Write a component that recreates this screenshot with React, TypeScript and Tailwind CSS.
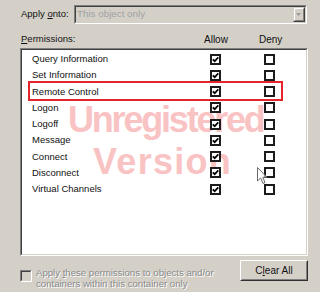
import React from "react";

const items = [
  "Query Information",
  "Set Information",
  "Remote Control",
  "Logon",
  "Logoff",
  "Message",
  "Connect",
  "Disconnect",
  "Virtual Channels",
];

function Check({ checked }: { checked: boolean }) {
  return (
    <div className="w-[11px] h-[11px] border-2 border-[#1c1c1c] bg-white flex items-center justify-center shrink-0">
      {checked && (
        <svg width="7" height="7" viewBox="0 0 7 7">
          <path d="M0.8 3.3 L2.7 5.2 L6.3 1.3" fill="none" stroke="#000" strokeWidth="1.7" />
        </svg>
      )}
    </div>
  );
}

export default function App() {
  return (
    <div className="relative w-[320px] h-[292px] overflow-hidden bg-[#d4d0c8] font-['Liberation_Sans',Arial,sans-serif] text-[9.5px] text-[#111] pt-[5px]">
      {/* Apply onto row */}
      <div className="flex items-center h-[19px] pl-[21px]">
        <div className="w-[53px]">
          Apply <span className="underline">o</span>nto:
        </div>
        <div className="w-[233px] h-[19px] border border-t-[#808080] border-l-[#808080] border-b-white border-r-white">
          <div className="w-full h-full border border-t-[#404040] border-l-[#404040] border-b-[#d4d0c8] border-r-[#d4d0c8] flex items-center">
            <div className="flex-1 pl-[1px] text-[9.8px] text-[#a0a0a0]">This object only</div>
            <div className="w-[12px] h-[15px] border border-t-[#d4d0c8] border-l-[#d4d0c8] border-b-[#404040] border-r-[#404040]">
              <div className="w-full h-full border border-t-white border-l-white border-b-[#808080] border-r-[#808080] flex items-center justify-center">
                <svg width="6" height="4" viewBox="0 0 6 4">
                  <path d="M0 0 H5 L2.5 3 Z" fill="#9a9a9a" />
                </svg>
              </div>
            </div>
          </div>
        </div>
      </div>

      {/* Header row */}
      <div className="flex items-center h-[12px] mt-[9px] pl-[21px]">
        <div className="w-[183px]">
          <span className="underline">P</span>ermissions:
        </div>
        <div className="w-[55px] text-[10px]">Allow</div>
        <div className="text-[10px]">Deny</div>
      </div>

      {/* List box */}
      <div className="ml-[20px] mt-[3px] w-[288px] h-[208px] border border-t-[#808080] border-l-[#808080] border-b-white border-r-white">
        <div className="w-full h-full border border-t-[#404040] border-l-[#404040] border-b-[#d4d0c8] border-r-[#d4d0c8] bg-white">
          <div className="relative z-20 pt-[1px]">
            {items.map((it) => (
              <div key={it} className="flex items-center h-[16.25px] pl-[10px]">
                <div className="w-[178px] whitespace-nowrap">{it}</div>
                <Check checked />
                <div className="w-[43px]" />
                <Check checked={false} />
              </div>
            ))}
            <div className="absolute left-[6px] top-[31px] w-[255px] h-[20px] border-2 border-[#e2262b]" />
          </div>
        </div>
      </div>

      {/* Bottom row */}
      <div className="flex items-start mt-[4px] pl-[20px] pr-[12px]">
        <div className="mt-[10px] w-[12px] h-[12px] border border-t-[#808080] border-l-[#808080] border-b-white border-r-white shrink-0">
          <div className="w-full h-full border border-t-[#404040] border-l-[#404040] border-b-[#d4d0c8] border-r-[#d4d0c8] bg-[#d4d0c8]" />
        </div>
        <div className="ml-[4px] mt-[6.5px] flex-1 leading-[11px] text-[9.6px] text-[#8a8a8a] [text-shadow:1px_1px_0_#ffffff] whitespace-nowrap">
          <div>
            Apply <span className="underline">t</span>hese permissions to objects and/or
          </div>
          <div>containers within this container only</div>
        </div>
        <div className="w-[68px] h-[21px] border border-t-white border-l-white border-b-[#303030] border-r-[#303030] shrink-0">
          <div className="w-full h-full border border-t-[#d4d0c8] border-l-[#d4d0c8] border-b-[#808080] border-r-[#808080] flex items-center justify-center text-[10px]">
            C<span className="underline">l</span>ear All
          </div>
        </div>
      </div>

      {/* Watermark */}
      <div className="pointer-events-none absolute z-10 left-[68px] top-[102px] text-[36px] leading-[36px] font-bold text-[#f9c3c3] tracking-[-2.2px] whitespace-nowrap">
        Unregistered
      </div>
      <div className="pointer-events-none absolute z-10 left-[93px] top-[144px] text-[36px] leading-[36px] font-bold text-[#f9c3c3] tracking-[1.3px] whitespace-nowrap">
        Version
      </div>

      {/* Cursor */}
      <svg className="absolute z-30 left-[257px] top-[167px]" width="12" height="18" viewBox="0 0 12 18">
        <path d="M0.5 0.5 L0.5 14 L3.7 11 L6 16.5 L8 15.6 L5.8 10.3 L10 10.3 Z" fill="#ffffff" fillOpacity="0.6" stroke="#6a6a6a" strokeWidth="1" />
      </svg>
    </div>
  );
}
